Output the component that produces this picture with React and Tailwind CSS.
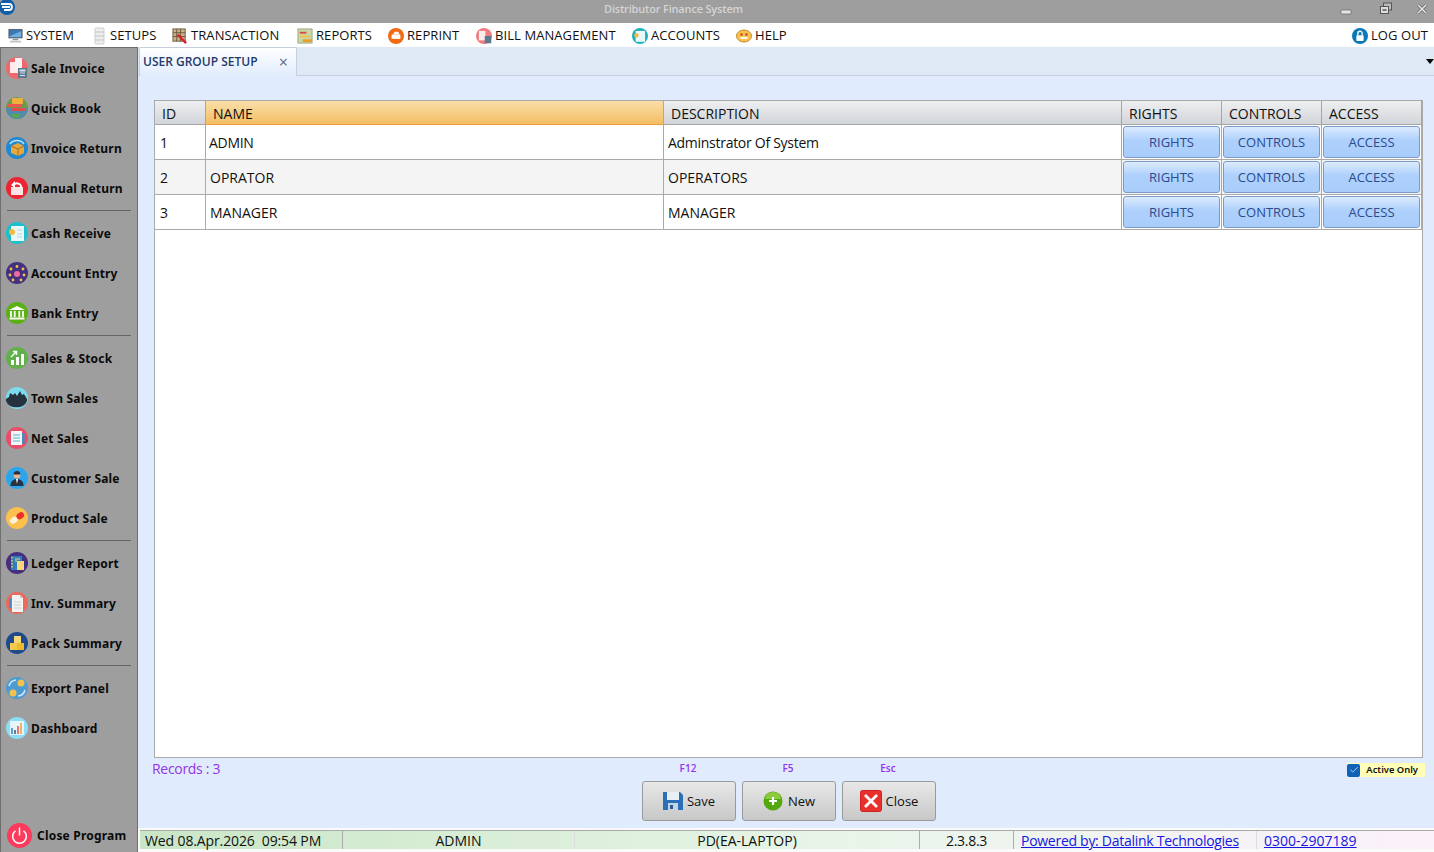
import { Check } from "lucide-react";

const ui = "font-['Open_Sans','Noto_Sans',sans-serif]";

// --------------------
// ICONS
// --------------------
function Disc({ bg, size = 22, children }) {
  return (
    <svg width={size} height={size} viewBox="0 0 22 22" className="shrink-0">
      <circle cx="11" cy="11" r="11" fill={bg} />
      {children}
    </svg>
  );
}

const sideIcons = {
  sale: (
    <Disc bg="#f0686c">
      <rect x="4" y="5" width="8" height="11" fill="#fdeaea" />
      <rect x="9" y="1" width="7" height="11" fill="#f4f4f4" />
      <rect x="12" y="11" width="9" height="10" fill="#5d7a8c" />
      <rect x="13.5" y="12.5" width="6" height="2" fill="#cfe3ee" />
      <path d="M14 16h5M14 18.5h5" stroke="#cfe3ee" strokeWidth="1" />
    </Disc>
  ),
  quick: (
    <Disc bg="#6a9c4a">
      <path d="M0 11a11 11 0 0 0 22 0z" fill="#4f8cb0" />
      <rect x="6" y="1" width="11" height="6" rx="1" fill="#f0b040" />
      <rect x="1" y="7" width="15" height="3" fill="#ef5350" />
      <rect x="5" y="11" width="14" height="3" fill="#e64a4a" />
      <path d="M5 17h10l-3 4H8z" fill="#5aa84a" />
    </Disc>
  ),
  invoiceReturn: (
    <Disc bg="#1e88d0">
      <path d="M4 7a8 7 0 0 1 14 0" fill="none" stroke="#bfe4fb" strokeWidth="1.5" />
      <path d="M5 9l7-3 6 3v7l-6 3-7-3z" fill="#e8a83c" />
      <path d="M5 9l7 3 6-3M12 12v7" fill="none" stroke="#a86f1c" strokeWidth="1" />
    </Disc>
  ),
  manualReturn: (
    <Disc bg="#ec2434">
      <rect x="5" y="10" width="12" height="8" fill="#fbe4e4" />
      <path d="M8 8a4 4 0 0 1 7 1v2" fill="none" stroke="#fff" strokeWidth="2" />
      <path d="M5 8l4-4v7z" fill="#fff" />
    </Disc>
  ),
  cash: (
    <Disc bg="#1cc0cc">
      <rect x="5" y="4" width="13" height="15" fill="#e9f7f8" />
      <circle cx="6" cy="10" r="3" fill="#f5b942" />
      <path d="M11 8h5M11 12h5M11 15h5" stroke="#b8d5d8" strokeWidth="1" />
    </Disc>
  ),
  account: (
    <Disc bg="#43307e">
      <circle cx="11" cy="12" r="3" fill="#ee6aa0" />
      <g fill="#f4c24a">
        <circle cx="11" cy="4.5" r="1.4" />
        <circle cx="5" cy="7" r="1.4" />
        <circle cx="17" cy="7" r="1.4" />
        <circle cx="4" cy="13" r="1.4" />
        <circle cx="18" cy="13" r="1.4" />
        <circle cx="7" cy="18" r="1.4" />
        <circle cx="15" cy="18" r="1.4" />
      </g>
    </Disc>
  ),
  bank: (
    <Disc bg="#58b011">
      <path d="M11 4l8 4H3z" fill="#fff" />
      <path d="M5 9v6M8.7 9v6M13.3 9v6M17 9v6" stroke="#fff" strokeWidth="1.8" />
      <rect x="3.5" y="15.5" width="15" height="2" fill="#fff" />
    </Disc>
  ),
  stock: (
    <Disc bg="#62b04c">
      <rect x="5" y="13" width="3" height="5" fill="#fff" />
      <rect x="10" y="10" width="3" height="8" fill="#fff" />
      <rect x="15" y="7" width="3" height="11" fill="#fff" />
      <path d="M5 10l5-5M7 4.5h3.5V8" fill="none" stroke="#fff" strokeWidth="1.4" />
    </Disc>
  ),
  town: (
    <Disc bg="#7cdcee">
      <path d="M0 12l3-2 1-4 3 2 2-2 2 3 3-5 2 4 2-1 3 5v2a11 9 0 0 1-21 0z" fill="#26333f" />
    </Disc>
  ),
  net: (
    <Disc bg="#e84e68">
      <rect x="5" y="4" width="11" height="14" fill="#f2f6fa" />
      <path d="M7 8h7M7 11h7M7 14h7" stroke="#54b6c8" strokeWidth="1" />
      <rect x="16" y="6" width="2.5" height="11" fill="#3a8ec4" />
    </Disc>
  ),
  customer: (
    <Disc bg="#2ba6ee">
      <circle cx="11" cy="8" r="3.5" fill="#e9b48c" />
      <path d="M7.5 7.5a3.5 3.5 0 0 1 7 0z" fill="#26323f" />
      <path d="M4.5 19c0-5 3-7 6.500-7s6.500 2 6.500 7z" fill="#26323f" />
      <path d="M10 12h2l-1 5z" fill="#fff" />
    </Disc>
  ),
  product: (
    <Disc bg="#fcc04e">
      <g transform="rotate(-35 11 11)">
        <rect x="3" y="8" width="8" height="6" rx="3" fill="#fff2d8" />
        <rect x="11" y="8" width="8" height="6" rx="3" fill="#ea2e2e" />
      </g>
    </Disc>
  ),
  ledger: (
    <Disc bg="#46307e">
      <rect x="5" y="4" width="11" height="14" fill="#2f7fc0" />
      <path d="M6 5v12" stroke="#f3d04c" strokeWidth="1.4" strokeDasharray="1.5 1.5" />
      <rect x="11" y="9" width="7" height="9" fill="#f6d77c" />
      <path d="M9 7h5M9 9h2" stroke="#f6d77c" strokeWidth="1" />
    </Disc>
  ),
  summary: (
    <Disc bg="#ec6a5c">
      <path d="M6 3h8l3 3v14H6z" fill="#f3f3f3" />
      <path d="M14 3v3h3z" fill="#c9c9c9" />
      <path d="M8 10h7M8 13h7M8 16h7" stroke="#d0d0d0" strokeWidth="1" />
      <rect x="3" y="6" width="2.500" height="10" fill="#4d8ec2" />
    </Disc>
  ),
  pack: (
    <Disc bg="#1f4a8c">
      <rect x="8" y="4" width="7" height="7" fill="#f6d778" />
      <rect x="4" y="11" width="7" height="7" fill="#f4c94c" />
      <rect x="11" y="11" width="7" height="7" fill="#eeb82c" />
    </Disc>
  ),
  exportPanel: (
    <Disc bg="#4e9bd4">
      <circle cx="15" cy="6" r="3.500" fill="#f4c24a" />
      <circle cx="7" cy="16" r="3.500" fill="#f4c24a" />
      <path d="M3 9a8 8 0 0 1 7-6M19 13a8 8 0 0 1-7 6" fill="none" stroke="#cfe7f7" strokeWidth="1.6" />
    </Disc>
  ),
  dashboard: (
    <Disc bg="#8edcf8">
      <rect x="4" y="4" width="14" height="14" fill="#e4f6fc" />
      <path d="M6 11v6" stroke="#3d8cc0" strokeWidth="1.600" />
      <path d="M9 13v4" stroke="#4c5a7a" strokeWidth="1.600" />
      <path d="M12 9v8" stroke="#e8565c" strokeWidth="1.600" />
      <path d="M15 6v11" stroke="#f0a63c" strokeWidth="1.600" />
    </Disc>
  ),
};

const menuIcons = {
  system: (
    <svg width="15" height="18" viewBox="0 0 16 18">
      <rect x="1" y="2" width="14" height="9" fill="#3c78b4" stroke="#56606a" />
      <path d="M2 9l12-5v6H2z" fill="#6fb0e0" />
      <rect x="5" y="12" width="6" height="1.500" fill="#8a949c" />
      <rect x="2" y="14" width="12" height="2" fill="#c2c8cc" />
    </svg>
  ),
  setups: (
    <svg width="14" height="18" viewBox="0 0 14 18">
      <rect x="2" y="1" width="9" height="16" rx="1" fill="#eeeeee" stroke="#cfcfcf" />
      <path d="M2 5h9M2 9h9M2 13h9" stroke="#c4c4c4" />
    </svg>
  ),
  transaction: (
    <svg width="16" height="16" viewBox="0 0 17 17">
      <rect x="1" y="1" width="13" height="13" fill="#c9b48a" stroke="#6b5a3c" />
      <path d="M1 5h13M1 9h13M5 1v13M9 1v13" stroke="#6b5a3c" />
      <path d="M6 7l9 9" stroke="#d8232a" strokeWidth="2.500" />
    </svg>
  ),
  reports: (
    <svg width="16" height="16" viewBox="0 0 17 17">
      <rect x="1" y="1" width="15" height="15" fill="#c8d8a8" stroke="#9aa884" />
      <rect x="3" y="4" width="7" height="2" fill="#e8483c" />
      <rect x="3" y="8" width="11" height="2" fill="#f4c04a" />
      <rect x="6" y="12" width="10" height="3" fill="#e8a02c" />
    </svg>
  ),
  reprint: (
    <Disc bg="#f26a12" size={16}>
      <rect x="5" y="9" width="12" height="6" fill="#fff" />
      <path d="M7 9l2-4h5l2 4z" fill="#fff" />
    </Disc>
  ),
  bill: (
    <Disc bg="#f07c80" size={16}>
      <rect x="4" y="4" width="9" height="13" fill="#fbecec" />
      <rect x="12" y="11" width="9" height="10" fill="#5d7a8c" />
    </Disc>
  ),
  accounts: (
    <Disc bg="#1cb0bc" size={16}>
      <rect x="5" y="4" width="13" height="15" fill="#e9f7f8" />
      <circle cx="6" cy="10" r="3" fill="#f5b942" />
    </Disc>
  ),
  help: (
    <svg width="16" height="16" viewBox="0 0 16 16">
      <ellipse cx="8" cy="8" rx="7.500" ry="6" fill="#f8c34c" stroke="#c98a2c" />
      <circle cx="5.500" cy="6.500" r="1.200" fill="#c8402c" />
      <circle cx="10.500" cy="6.500" r="1.200" fill="#c8402c" />
      <path d="M4.500 10h7" stroke="#fff" strokeWidth="1.800" />
    </svg>
  ),
  logout: (
    <Disc bg="#0a78b8" size={16}>
      <path d="M8 10V7.500a3 3 0 0 1 6 0V10" fill="none" stroke="#fff" strokeWidth="1.800" />
      <rect x="6" y="10" width="10" height="8" rx="1" fill="#fff" />
    </Disc>
  ),
};

// --------------------
// DATA
// --------------------
const menu = [
  { label: "SYSTEM", icon: "system", w: "w-[85px]" },
  { label: "SETUPS", icon: "setups", w: "w-[79px]" },
  { label: "TRANSACTION", icon: "transaction", w: "w-[125px]" },
  { label: "REPORTS", icon: "reports", w: "w-[91px]" },
  { label: "REPRINT", icon: "reprint", w: "w-[88px]" },
  { label: "BILL MANAGEMENT", icon: "bill", w: "w-[156px]" },
  { label: "ACCOUNTS", icon: "accounts", w: "w-[104px]" },
  { label: "HELP", icon: "help", w: "w-[60px]" },
];

const sideGroups = [
  [
    ["Sale Invoice", "sale"],
    ["Quick Book", "quick"],
    ["Invoice Return", "invoiceReturn"],
    ["Manual Return", "manualReturn"],
  ],
  [
    ["Cash Receive", "cash"],
    ["Account Entry", "account"],
    ["Bank Entry", "bank"],
  ],
  [
    ["Sales & Stock", "stock"],
    ["Town Sales", "town"],
    ["Net Sales", "net"],
    ["Customer Sale", "customer"],
    ["Product Sale", "product"],
  ],
  [
    ["Ledger Report", "ledger"],
    ["Inv. Summary", "summary"],
    ["Pack Summary", "pack"],
  ],
  [
    ["Export Panel", "exportPanel"],
    ["Dashboard", "dashboard"],
  ],
];

const rows = [
  { id: 1, name: "ADMIN", desc: "Adminstrator Of System", nameCls: "pl-[3px] tracking-[-0.3px]", descCls: "tracking-[-0.28px]" },
  { id: 2, name: "OPRATOR", desc: "OPERATORS", nameCls: "pl-[4px]", alt: true },
  { id: 3, name: "MANAGER", desc: "MANAGER", nameCls: "pl-[4px]" },
];

const cols = "grid grid-cols-[51px_458px_458px_100px_100px_100px]";

// --------------------
// SUBCOMPONENTS
// --------------------
function HeadCell({ children, active }) {
  return (
    <div
      className={`h-[24px] pl-[7px] pt-[2px] text-[14px] leading-[22px] text-[#111] border-r border-b ${
        active
          ? "bg-gradient-to-b from-[#fadfa8] to-[#f3bd62] border-[#ee9d3c]"
          : "bg-gradient-to-b from-[#eeeff1] to-[#d2d5d9] border-[#a6a6a6]"
      }`}
    >
      {children}
    </div>
  );
}

function GridButton({ children }) {
  return (
    <div className="p-px border-r border-b border-[#aaa] h-[35px]">
      <button className="w-full h-[32px] pt-[2px] rounded-[3px] border border-[#7d9ac6] bg-gradient-to-b from-[#dcebff] via-[#aed0fc] via-45% to-[#a9cdfb] text-[13px] text-[#2c4a8e]">
        {children}
      </button>
    </div>
  );
}

function FooterButton({ label, keyName, icon }) {
  return (
    <div className="flex flex-col items-center w-[94px]">
      <span className="h-[23px] pt-[3px] pr-[2px] text-[10px] font-semibold leading-[14px] text-[#9333ea]">{keyName}</span>
      <button className="w-[94px] h-[40px] flex items-center justify-center gap-[4px] rounded-[3px] border border-[#9a9a9a] bg-gradient-to-b from-[#e8e8e8] to-[#c8c8c8] text-[13px] text-[#111]">
        {icon}
        <span className="pt-[2px]">{label}</span>
      </button>
    </div>
  );
}

export default function App() {
  return (
    <div className={`h-screen w-full overflow-hidden flex flex-col bg-white ${ui}`}>
      {/* TITLE BAR */}
      <div className="h-[23px] shrink-0 bg-[#9e9e9e] relative flex items-start justify-between">
        <svg width="16" height="16" viewBox="0 0 16 16">
          <circle cx="7" cy="7" r="8" fill="#0f5fa8" />
          <path d="M1 4h8a3 3 0 0 1 0 6H4M2 7h8" fill="none" stroke="#fff" strokeWidth="1.800" />
        </svg>
        <span className="absolute left-[604px] top-[1px] text-[11px] font-semibold leading-[16px] tracking-[-0.18px] text-[#d4d4d4]">
          Distributor Finance System
        </span>
        <div className="flex items-start">
          <svg width="12" height="12" viewBox="0 0 12 12" className="mt-[4px] mr-[27px]">
            <rect x="1" y="6" width="10" height="4" rx="1" fill="#e4e4e4" stroke="#666" strokeWidth="0.700" />
          </svg>
          <svg width="14" height="13" viewBox="0 0 14 13" className="mt-[2px] mr-[23px]">
            <rect x="4.500" y="1" width="8" height="7" fill="#bbb" stroke="#555" />
            <rect x="1.500" y="4.500" width="8" height="7" fill="#ddd" stroke="#555" />
            <rect x="3.500" y="7" width="4" height="2" fill="#777" />
          </svg>
          <svg width="12" height="12" viewBox="0 0 12 12" className="mt-[3px] mr-[6px]">
            <path d="M2 2l8 8M10 2l-8 8" stroke="#666" strokeWidth="3" />
            <path d="M2 2l8 8M10 2l-8 8" stroke="#e8e8e8" strokeWidth="1.500" />
          </svg>
        </div>
      </div>

      {/* MENU */}
      <div className="h-[24px] shrink-0 bg-white flex items-center justify-between pt-[2px] pl-[8px] pr-[6px] text-[13px] tracking-[0.08px] text-[#111]">
        <div className="flex items-center">
          {menu.map((m) => (
            <div key={m.label} className={`flex items-center gap-[3px] ${m.w}`}>
              {menuIcons[m.icon]}
              <span>{m.label}</span>
            </div>
          ))}
        </div>
        <div className="flex items-center gap-[3px]">
          {menuIcons.logout}
          <span>LOG OUT</span>
        </div>
      </div>

      <div className="flex-1 min-h-0 flex">
        {/* SIDEBAR */}
        <aside className="w-[138px] shrink-0 bg-[#9e9e9e] border-x border-t border-[#6e6e6e] flex flex-col font-['Noto_Sans',sans-serif] font-bold text-[12px] text-[#0a0a0a] tracking-[0.2px]">
          {sideGroups.map((group, i) => (
            <div key={i}>
              {i > 0 && (
                <div className="h-[5px] flex items-center px-[6px]">
                  <div className="w-full h-px bg-[#666]" />
                </div>
              )}
              {group.map(([label, icon]) => (
                <div key={label} className="h-[40px] flex items-center gap-[3px] pl-[5px]">
                  {sideIcons[icon]}
                  <span className="pt-[2px]">{label}</span>
                </div>
              ))}
            </div>
          ))}
          <div className="mt-auto h-[34px] flex items-center gap-[5px] pl-[6px]">
            <Disc bg="#fb3a5c" size={25}>
              <path d="M7.500 7a6 6 0 1 0 7 0" fill="none" stroke="#fff" strokeWidth="1.300" />
              <path d="M11 4v7" stroke="#fff" strokeWidth="1.300" />
            </Disc>
            <span className="pt-[2px]">Close Program</span>
          </div>
        </aside>

        <main className="flex-1 min-w-0 flex flex-col bg-[#e0ecfd]">
          {/* TABS */}
          <div className="h-[29px] shrink-0 bg-[#dfe8f5] border-b border-[#c6cfdc] flex items-end relative">
            <div className="ml-[1px] w-[158px] h-[29px] -mb-px rounded-t-[2px] border-x border-t border-[#c4cfdf] bg-gradient-to-b from-white to-[#e0ecfd] flex items-center justify-between pl-[3px] pr-[8px]">
              <span className="text-[12px] font-semibold text-[#1f3a6b]">USER GROUP SETUP</span>
              <span className="text-[16px] leading-none text-[#5a6b80]">×</span>
            </div>
            <span className="absolute right-0 top-[12px] w-0 h-0 border-x-[4px] border-x-transparent border-t-[5px] border-t-black" />
          </div>

          {/* GRID */}
          <div className="flex-1 min-h-0 flex flex-col pt-[24px] pl-[16px] pr-[11px]">
            <div className="flex-1 min-h-0 bg-white border border-[#aaa]">
              <div className={cols}>
                <HeadCell>ID</HeadCell>
                <HeadCell active>NAME</HeadCell>
                <HeadCell>DESCRIPTION</HeadCell>
                <HeadCell>RIGHTS</HeadCell>
                <HeadCell>CONTROLS</HeadCell>
                <HeadCell>ACCESS</HeadCell>
              </div>
              {rows.map((r) => (
                <div key={r.id} className={`${cols} h-[35px] text-[14px] text-[#111] ${r.alt ? "bg-[#f4f4f4]" : "bg-white"}`}>
                  <div className="border-r border-b border-[#aaa] pl-[5px] flex items-center">{r.id}</div>
                  <div className={`border-r border-b border-[#aaa] flex items-center ${r.nameCls}`}>{r.name}</div>
                  <div className={`border-r border-b border-[#aaa] pl-[4px] flex items-center ${r.descCls || ""}`}>{r.desc}</div>
                  <GridButton>RIGHTS</GridButton>
                  <GridButton>CONTROLS</GridButton>
                  <GridButton>ACCESS</GridButton>
                </div>
              ))}
            </div>
          </div>

          {/* FOOTER */}
          <div className="h-[70px] shrink-0 pl-[14px] pr-[8px] grid grid-cols-[1fr_auto_1fr]">
            <span className="pt-[1px] text-[14px] leading-[20px] tracking-[-0.3px] text-[#9333ea]">Records : 3</span>
            <div className="flex gap-[6px]">
              <FooterButton
                label="Save"
                keyName="F12"
                icon={
                  <svg width="20" height="20" viewBox="0 0 20 20">
                    <path d="M0 1h17l3 3v15H0z" fill="#2a6fb8" />
                    <rect x="4" y="1" width="12" height="8" fill="#e8eef4" />
                    <rect x="5" y="12" width="10" height="7" fill="#c4d4e2" />
                    <rect x="7" y="14" width="3" height="4" fill="#2a5a90" />
                  </svg>
                }
              />
              <FooterButton
                label="New"
                keyName="F5"
                icon={
                  <svg width="20" height="20" viewBox="0 0 20 20" className="mr-[1px]">
                    <circle cx="10" cy="10" r="9.500" fill="#52a80c" />
                    <path d="M2 8a8 7 0 0 1 16 0z" fill="#8ecb3c" />
                    <path d="M10 6v8M6 10h8" stroke="#fff" strokeWidth="2.200" />
                  </svg>
                }
              />
              <FooterButton
                label="Close"
                keyName="Esc"
                icon={
                  <svg width="22" height="22" viewBox="0 0 22 22">
                    <rect x="0.500" y="0.500" width="21" height="21" rx="2" fill="#e8302c" stroke="#c22" />
                    <path d="M5 5l12 12M17 5L5 17" stroke="#fff" strokeWidth="2.800" />
                  </svg>
                }
              />
            </div>
            <div className="flex justify-end items-start pt-[5px]">
              <div className="h-[14px] mr-[1px] flex items-center bg-[#ffffb8] pr-[7px]">
                <span className="w-[13px] h-[13px] rounded-[2px] bg-[#0f62b8] flex items-center justify-center">
                  <Check size={10} strokeWidth={2} className="text-[#cfe4fa]" />
                </span>
                <span className="ml-[6px] font-['Noto_Sans',sans-serif] font-semibold text-[9.4px] text-[#111]">Active Only</span>
              </div>
            </div>
          </div>

          {/* STATUS BAR */}
          <div className="h-[24px] shrink-0 bg-[#fafafa] pt-[2px] pl-[2px] flex text-[14px] text-[#111]">
            <div className="flex-1 min-w-0 h-[19px] flex border-t border-[#aaa] bg-gradient-to-r from-[#c9e6c6] via-[#e9f5e9] via-55% to-[#fbf1fb] leading-[20px]">
              <div className="w-[203px] pl-[5px] tracking-[-0.12px] border-r border-[#aaa] whitespace-pre">Wed 08.Apr.2026  09:54 PM</div>
              <div className="w-[232px] text-center border-r border-[#ddd]">ADMIN</div>
              <div className="w-[345px] text-center border-r border-[#aaa]">PD(EA-LAPTOP)</div>
              <div className="w-[94px] text-center tracking-[-0.3px] border-r border-[#aaa]">2.3.8.3</div>
              <div className="w-[243px] pl-[7px] tracking-[-0.28px] border-r border-[#ddd] text-[#1616e0] underline">Powered by: Datalink Technologies</div>
              <div className="pl-[7px] text-[#1616e0] underline">0300-2907189</div>
            </div>
          </div>
        </main>
      </div>
    </div>
  );
}
